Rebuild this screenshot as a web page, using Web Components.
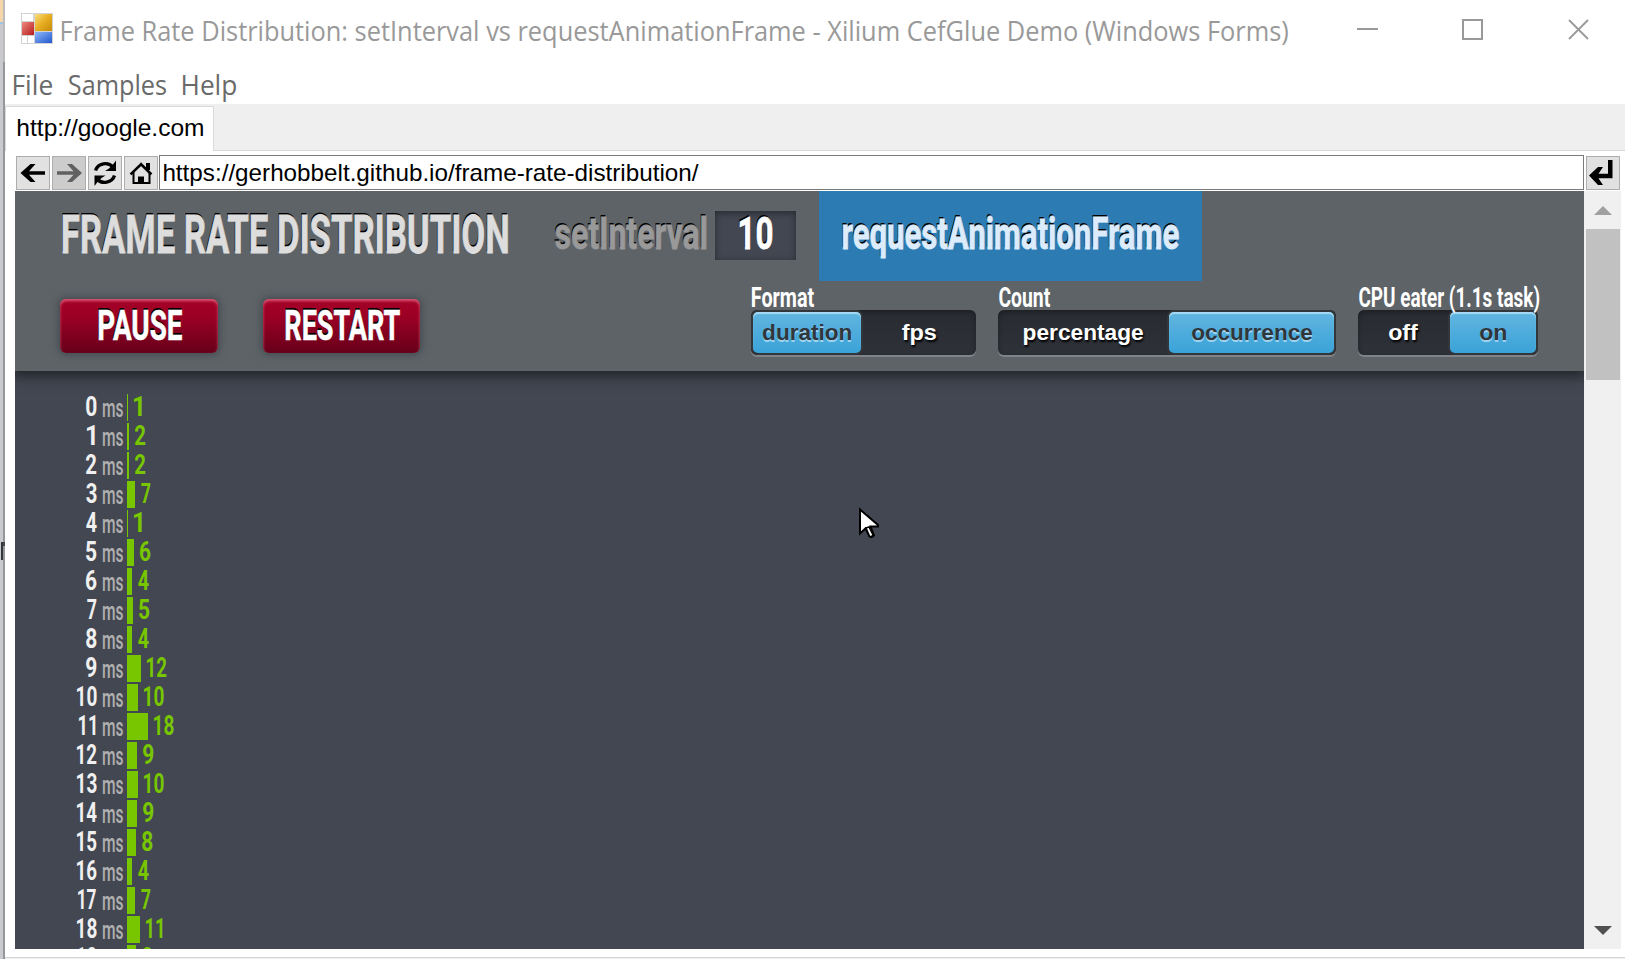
<!DOCTYPE html>
<html lang="en">
<head>
<meta charset="utf-8">
<title>Frame Rate Distribution</title>
<style>
html, body { margin: 0; padding: 0; }
body { width: 1625px; height: 959px; overflow: hidden; background: #fff; font-family: "Liberation Sans", sans-serif; }
</style>
</head>
<body>
<app-window></app-window>
<script>
const make = (host, html) => { host.attachShadow({ mode: "open" }).innerHTML = html; };

/* One line of text whose ink is stretched to exactly `w` pixels. */
class FitText extends HTMLElement {
  connectedCallback() {
    if (this.shadowRoot) return;
    make(this, `<style>:host{display:block;flex:none;white-space:pre;line-height:1}
      span{display:inline-block;transform-origin:0 0;vertical-align:top}</style><span><slot></slot></span>`);
    const w = +this.getAttribute("w");
    this.style.width = w + "px";
    const cs = getComputedStyle(this);
    const ctx = document.createElement("canvas").getContext("2d");
    /* measured at ten times the size, since ink boxes come back rounded */
    ctx.font = cs.fontWeight + " " + parseFloat(cs.fontSize) * 10 + "px " + cs.fontFamily;
    const m = ctx.measureText(this.textContent);
    const left = m.actualBoundingBoxLeft / 10, ink = left + m.actualBoundingBoxRight / 10;
    const k = w / ink;
    this.shadowRoot.querySelector("span").style.transform = `translateX(${left * k}px) scaleX(${k})`;
  }
}

class DesktopEdge extends HTMLElement {
  connectedCallback() {
    make(this, `<style>:host{display:flex;flex:none;width:5px;height:959px}
      .a{width:3px;display:flex;flex-direction:column;background:#c9cacf}
      .a i:nth-child(1){height:22px;background:#f6d5a8}.a i:nth-child(2){height:2px;background:#9cc3ea}
      .a i:nth-child(3){height:518px}.a i:nth-child(4){height:18px;background:#33363b;margin-left:1px}
      .b{width:2px;background:linear-gradient(#bbb 0 62px,#96979b 62px 542px,#44474c 542px 546px,#96979b 546px)}</style>
      <div class="a"><i></i><i></i><i></i><i></i></div><div class="b"></div>`);
  }
}

class TitleBar extends HTMLElement {
  connectedCallback() {
    make(this, `<style>:host{display:flex;height:66px;color:#999;font:27px "Open Sans",sans-serif}
      .logo{margin:13px 9px 0 16px;flex:none}
      fit-text{margin-top:17px}
      svg{flex:none}.min{margin:28px 0 0 69px}.max{margin:19px 0 0 84px}.x{margin:19px 0 0 85px}</style>
      <svg class="logo" width="32" height="31" viewBox="0 0 32 31">
        <defs>
          <linearGradient id="r" x2="1" y2="1"><stop stop-color="#ee8a80"/><stop offset="1" stop-color="#b61c1c"/></linearGradient>
          <linearGradient id="y" x2="1" y2="1"><stop stop-color="#fbdc7c"/><stop offset=".5" stop-color="#e6ad20"/><stop offset="1" stop-color="#c48a0c"/></linearGradient>
          <linearGradient id="b" x2="1" y2="1"><stop stop-color="#8db8fa"/><stop offset="1" stop-color="#2257cc"/></linearGradient>
        </defs>
        <rect width="32" height="31" fill="#d3d3d3"/>
        <rect x="1" y="1" width="11" height="7" fill="#fff"/>
        <rect x="1" y="9" width="12" height="13" fill="url(#r)"/>
        <rect x="14" y="1" width="17" height="17" fill="url(#y)"/>
        <rect x="14" y="19" width="17" height="11" fill="url(#b)"/>
        <rect x="1" y="23" width="5" height="7" fill="#fff"/><rect x="7" y="23" width="6" height="7" fill="#fff"/>
      </svg>
      <fit-text w="1226">Frame Rate Distribution: setInterval vs requestAnimationFrame - Xilium CefGlue Demo (Windows Forms)</fit-text>
      <svg class="min" width="21" height="2"><rect width="21" height="2" fill="#999"/></svg>
      <svg class="max" width="21" height="21"><rect x="1" y="1" width="19" height="19" fill="none" stroke="#999" stroke-width="2"/></svg>
      <svg class="x" width="21" height="21"><path d="M1 1L20 20M20 1L1 20" stroke="#999" stroke-width="1.8"/></svg>`);
  }
}

class MenuBar extends HTMLElement {
  connectedCallback() {
    make(this, `<style>:host{display:flex;height:38px;color:#6a6a6a;font:26.5px "Open Sans",sans-serif}
      fit-text{margin-top:6px}</style>
      <fit-text w="38" style="margin-left:9px">File</fit-text>
      <fit-text w="97" style="margin-left:16.500px">Samples</fit-text>
      <fit-text w="53" style="margin-left:17.500px">Help</fit-text>`);
  }
}

class TabStrip extends HTMLElement {
  connectedCallback() {
    make(this, `<style>:host{display:flex;height:47px;background:#efefef;font-size:24px;color:#000}
      .tab{box-sizing:border-box;flex:none;width:209px;height:45px;margin-top:2px;background:#fff;border:1px solid #d9d9d9;border-bottom:0;padding:9px 0 0 11.500px}
      .rest{flex:1;border-bottom:1px solid #d9d9d9}</style>
      <div class="tab"><fit-text w="185">http://google.com</fit-text></div><div class="rest"></div>`);
  }
}

const ICONS = {
  back: `<path d="M4.500 17L14.500 8H19.500L13 15.200H29V18.800H13L19.500 26H14.500Z"/>`,
  forward: `<path d="M30 17L20 8H15L21.500 15.200H5V18.800H21.500L15 26H20Z" fill="#606060"/>`,
  reload: `<g fill="none" stroke="#000" stroke-width="3.400"><path d="M7.500 14.500C10 7 20 5.500 25 11"/><path d="M26.500 19.500C24 27 14 28.500 9 23"/></g><path d="M28 4.500V15H17L21 12.500L25 8.500ZM6.500 30V19.500H17.500L13.500 22L9.500 26Z"/>`,
  home: `<path d="M17 8.300L26.500 17.500M17 8.300L7.500 17.500" stroke="#000" stroke-width="2.600" stroke-linecap="square"/><path d="M22 7h4v7h-4z"/><path d="M9.500 16V27H25.500V16" fill="none" stroke="#000" stroke-width="2"/><path d="M14 20.500h6v7.500h-6z"/>`,
  enter: `<path d="M3 19.500L12 11H17L12.500 17.800H22V4H26.500V22.200H12.500L17 29H12Z"/>`
};
class NavButton extends HTMLElement {
  connectedCallback() {
    const n = this.getAttribute("icon");
    make(this, `<style>:host{display:block;flex:none;box-sizing:border-box;width:34px;height:34px;margin:1px 2px 0 0;border:1px solid #adadad;background:${n === "forward" ? "#ccc" : "#e1e1e1"}}
      svg{display:block;margin:-1px}</style><svg width="34" height="34">${ICONS[n]}</svg>`);
  }
}
class NavBar extends HTMLElement {
  connectedCallback() {
    make(this, `<style>:host{display:flex;height:36px;padding:4px 0 0 11px;font-size:24px;color:#000;background:#fff}
      .url{box-sizing:border-box;width:1425px;height:35px;border:1px solid #7a7a7a;margin:0 2px 0 -1px;padding:5px 0 0 3.500px;flex:none}</style>
      <nav-button icon="back"></nav-button><nav-button icon="forward"></nav-button><nav-button icon="reload"></nav-button><nav-button icon="home"></nav-button>
      <div class="url"><fit-text w="534.500">https://gerhobbelt.github.io/frame-rate-distribution/</fit-text></div>
      <nav-button icon="enter"></nav-button>`);
  }
}

class PushButton extends HTMLElement {
  connectedCallback() {
    make(this, `<style>:host{display:flex;justify-content:center;box-sizing:border-box;flex:none;height:54px;padding:5px 0 0 2px;border-radius:6px;color:#fff;font-size:43px;font-weight:700;-webkit-text-stroke:.6px;
      background:linear-gradient(#a60028,#9a0024 35%,#66001a);text-shadow:-1px -2px 0 #000;
      box-shadow:0 0 7px 2px rgba(50,60,66,.6),inset 0 2px 3px rgba(255,150,170,.6)}</style><slot></slot>`);
  }
}

class ToggleSwitch extends HTMLElement {
  connectedCallback() {
    make(this, `<style>:host{display:block;flex:none}
      .lab{box-sizing:border-box;padding:2px 0 0 .5px;color:#fff;font-size:27px;font-weight:700;height:27px;display:flex}
      .sw{box-sizing:border-box;display:flex;height:45px;padding:2px;border-radius:6px;background:linear-gradient(#282b30,#2e3138);
        box-shadow:inset 0 2px 5px rgba(0,0,0,.3),0 2px 0 #808488}</style>
      <div class="lab"><slot name="label"></slot></div><div class="sw"><slot></slot></div>`);
  }
}
class ToggleOption extends HTMLElement {
  connectedCallback() {
    const on = this.hasAttribute("on");
    make(this, `<style>:host{display:flex;justify-content:center;box-sizing:border-box;flex:none;height:41px;padding-top:10px;font:700 22.400px "Liberation Sans",sans-serif;
      ${on ? "color:#30363b;border-radius:5px;background:linear-gradient(#62b5e0,#3aa3d8);text-shadow:0 2px 0 rgba(190,225,245,.75);box-shadow:0 0 0 2px #33373c,inset 0 2px 1px rgba(190,230,250,.75)"
           : "color:#fff;text-shadow:1px 2px 2px #000"}}</style><slot></slot>`);
  }
}

class FrameHeader extends HTMLElement {
  connectedCallback() {
    make(this, `<style>:host{display:block;flex:none;position:relative;height:180px;background:#5e6367;font-family:Roboto,sans-serif;font-weight:700;box-shadow:0 3px 12px 2px rgba(20,22,26,.75)}
      .top{display:flex;height:90px;-webkit-text-stroke:.8px}
      .title{font-size:53.500px;color:#ddd;margin:17px 0 0 47.500px;text-shadow:-1px -2px 0 #000}
      .si{font-size:44px;color:#999;margin:21px 0 0 47px;text-shadow:-1px -2.500px 0 #000}
      .num{box-sizing:border-box;width:81px;height:49px;margin:20px 23px 0 9.500px;padding:1px 0 0 25px;background:#434751;color:#fff;font-size:44px;text-shadow:-1px -2px 0 #000;box-shadow:inset 0 2px 7px #272a30}
      .raf{box-sizing:border-box;width:383px;height:90px;padding:20.500px 0 0 24px;background:#2d7bb3;color:#dcecfc;font-size:44px;text-shadow:-1px -2.500px 0 #000}
      .bot{display:flex}
      push-button{margin-top:18px}
      toggle-switch{margin-top:2px}</style>
      <div class="top">
        <fit-text class="title" w="445">FRAME RATE DISTRIBUTION</fit-text>
        <fit-text class="si" w="151">setInterval</fit-text>
        <div class="num"><fit-text w="32">10</fit-text></div>
        <div class="raf"><fit-text w="335.500">requestAnimationFrame</fit-text></div>
      </div>
      <div class="bot">
        <push-button style="width:158px;margin-left:45px"><fit-text w="83">PAUSE</fit-text></push-button>
        <push-button style="width:157px;margin-left:45px"><fit-text w="114">RESTART</fit-text></push-button>
        <toggle-switch style="width:225px;margin-left:331px"><fit-text slot="label" w="62">Format</fit-text>
          <toggle-option on style="width:108px"><fit-text w="88">duration</fit-text></toggle-option><toggle-option style="width:116px"><fit-text w="34">fps</fit-text></toggle-option></toggle-switch>
        <toggle-switch style="width:338px;margin-left:22px"><fit-text slot="label" w="51">Count</fit-text>
          <toggle-option style="width:169px;padding-right:3px"><fit-text w="119">percentage</fit-text></toggle-option><toggle-option on style="width:165px"><fit-text w="120">occurrence</fit-text></toggle-option></toggle-switch>
        <toggle-switch style="width:180px;margin-left:22px"><fit-text slot="label" w="180">CPU eater (1.1s task)</fit-text>
          <toggle-option style="width:90px;padding-right:3px"><fit-text w="29">off</fit-text></toggle-option><toggle-option on style="width:86px"><fit-text w="26">on</fit-text></toggle-option></toggle-switch>
      </div>`);
  }
}

class HistogramRow extends HTMLElement {
  connectedCallback() {
    const a = n => this.getAttribute(n), ms = a("ms"), c = a("count");
    const wide = s => s === "11" ? 16.500 : s === "17" ? 18 : s.length > 1 ? 19.500 : s === "1" ? 8 : s === "7" ? 9.500 : 10.500;
    make(this, `<style>:host{display:flex;flex:none;height:29px;font-family:Roboto,sans-serif;color:#f0f0f0}
      .n{width:${ms.endsWith("1") ? 80 : 81}px;display:flex;justify-content:flex-end;font-size:27.500px;font-weight:700;margin:-1px ${ms.endsWith("1") ? 1 : 0}px 0 0}
      .u{margin:1.500px 4.500px 0 6.500px;color:#b0b0b0;font-size:25px;font-weight:500}
      .bar{height:27px;background:#77c600;flex:none}
      .c{color:#77c600;font-size:27.500px;font-weight:700;margin:-1px 0 0 6px}</style>
      <div class="n"><fit-text w="${wide(ms)}">${ms}</fit-text></div><fit-text class="u" w="20">ms</fit-text>
      <div class="bar" style="width:${a("bar")}px"></div><fit-text class="c" w="${wide(c)}">${c}</fit-text>`);
  }
}
class HistogramChart extends HTMLElement {
  connectedCallback() {
    const rows = [[1,1],[2,2],[2,2],[7,8],[1,1],[6,7],[4,5],[5,6],[4,5],[12,14],[10,11],[18,21],[9,10],[10,11],[9,10],[8,9],[4,5],[7,8],[11,13],[8,9]];
    make(this, `<style>:host{display:flex;flex-direction:column;padding-top:23px}</style>` +
      rows.map(([c, b], i) => `<histogram-row ms="${i}" count="${c}" bar="${b}"></histogram-row>`).join(""));
  }
}

class ScrollBar extends HTMLElement {
  connectedCallback() {
    make(this, `<style>:host{display:flex;flex-direction:column;align-items:center;flex:none;width:37px;height:758px;background:#f0f0f0}
      .thumb{width:34px;height:151px;background:#c1c1c1;margin-top:14px}
      svg{flex:none}.up{margin-top:15px}.dn{margin:auto 0 14px}</style>
      <svg class="up" width="18" height="9"><path d="M9 0L18 9H0Z" fill="#a0a0a0"/></svg>
      <div class="thumb"></div>
      <svg class="dn" width="18" height="9"><path d="M0 0H18L9 9Z" fill="#505050"/></svg>`);
  }
}

class AppWindow extends HTMLElement {
  connectedCallback() {
    make(this, `<style>:host{display:flex;position:relative;width:1625px;height:959px;overflow:hidden}
      .win{flex:1;min-width:0;display:flex;flex-direction:column;background:#fff}
      .view{display:flex;height:758px;margin-left:10px}
      .page{width:1569px;height:758px;background:#434751;overflow:hidden;flex:none;display:flex;flex-direction:column}
      .foot{margin-top:8px;height:1px;background:#d4d4d4;border-bottom:1px solid #efefef;flex:none}
      .ptr{position:absolute;left:858px;top:507px}</style>
      <desktop-edge></desktop-edge>
      <div class="win">
        <title-bar></title-bar><menu-bar></menu-bar><tab-strip></tab-strip><nav-bar></nav-bar>
        <div class="view"><div class="page"><frame-header></frame-header><histogram-chart></histogram-chart></div><scroll-bar></scroll-bar></div>
        <div class="foot"></div>
      </div>
      <svg class="ptr" width="22" height="33"><path d="M2 2.500V26.500L7.500 21.500L11.500 29.500Q14 31 16 28.500L12.500 19.500H20V18Z" fill="#fff" stroke="#000" stroke-width="2"/><path d="M8 21L11 20L15 28Q13.500 30.500 11.500 29Z" fill="#fff" stroke="#000" stroke-width="1.500"/></svg>`);
  }
}

[["fit-text", FitText], ["desktop-edge", DesktopEdge], ["title-bar", TitleBar], ["menu-bar", MenuBar], ["tab-strip", TabStrip],
 ["nav-button", NavButton], ["nav-bar", NavBar], ["push-button", PushButton], ["toggle-option", ToggleOption], ["toggle-switch", ToggleSwitch],
 ["frame-header", FrameHeader], ["histogram-row", HistogramRow], ["histogram-chart", HistogramChart], ["scroll-bar", ScrollBar], ["app-window", AppWindow]
].forEach(([n, c]) => customElements.define(n, c));
</script>
</body>
</html>
